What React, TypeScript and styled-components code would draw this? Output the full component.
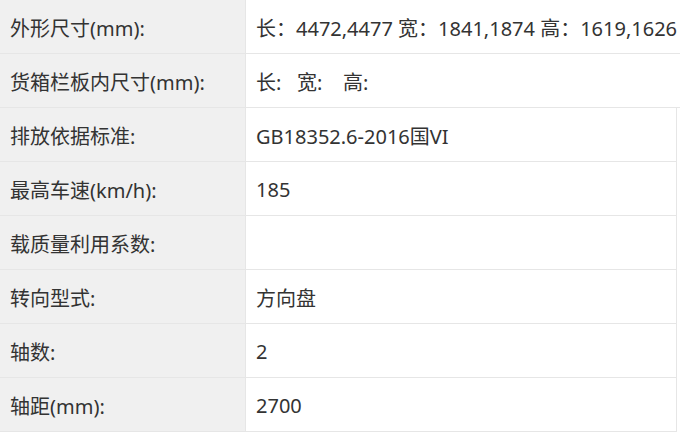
import styled, { createGlobalStyle } from "styled-components";

const GlobalStyle = createGlobalStyle`
  html, body {
    margin: 0;
    padding: 0;
    background: #ffffff;
    overflow: hidden;
  }
  body {
    font-family: "Noto Sans", "Noto Sans CJK SC", sans-serif;
  }
`;

const Page = styled.div`
  width: 680px;
  height: 434px;
  overflow: hidden;
  background: #ffffff;
`;

const Table = styled.div<{ $wide?: boolean }>`
  width: ${(p) => (p.$wide ? "760px" : "677px")};
  border-right: ${(p) => (p.$wide ? "none" : "1px solid #e6e6e6")};
  box-sizing: border-box;
`;

const Row = styled.div`
  display: grid;
  grid-template-columns: 246px 1fr;
  height: 54px;
  border-bottom: 1px solid #e6e6e6;
  box-sizing: border-box;
`;

const Label = styled.div`
  display: flex;
  align-items: center;
  padding-left: 10px;
  padding-top: 1px;
  background: #f0f0f0;
  border-right: 1px solid #e6e6e6;
  color: #333333;
  font-size: 20px;
  white-space: nowrap;
`;

const Value = styled.div`
  display: flex;
  align-items: center;
  padding-left: 10px;
  padding-top: 1px;
  color: #333333;
  font-size: 20px;
  white-space: pre;
`;

const topRows = [
  ["外形尺寸(mm):", "长：4472,4477 宽：1841,1874 高：1619,1626"],
  ["货箱栏板内尺寸(mm):", "长:   宽:    高:"],
];

const rows = [
  ["排放依据标准:", "GB18352.6-2016国VI"],
  ["最高车速(km/h):", "185"],
  ["载质量利用系数:", ""],
  ["转向型式:", "方向盘"],
  ["轴数:", "2"],
  ["轴距(mm):", "2700"],
];

export default function App() {
  return (
    <Page>
      <GlobalStyle />
      <Table $wide>
        {topRows.map(([k, v]) => (
          <Row key={k}>
            <Label>{k}</Label>
            <Value>{v}</Value>
          </Row>
        ))}
      </Table>
      <Table>
        {rows.map(([k, v]) => (
          <Row key={k}>
            <Label>{k}</Label>
            <Value>{v}</Value>
          </Row>
        ))}
      </Table>
    </Page>
  );
}
